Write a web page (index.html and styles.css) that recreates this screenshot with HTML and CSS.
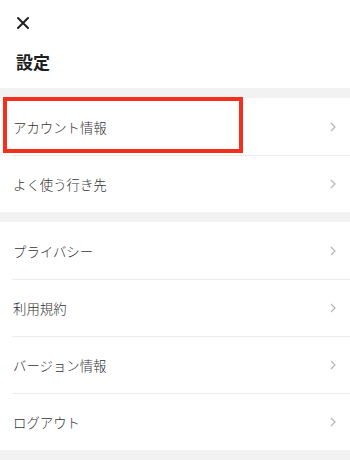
FILE: index.html
```html
<!DOCTYPE html>
<html lang="ja">
<head>
<meta charset="utf-8">
<link rel="stylesheet" href="styles.css">
</head>
<body>
<div class="page">
  <header class="header">
    <div class="close">
      <svg width="14" height="14" viewBox="0 0 14 14"><path d="M2 2 L12 12 M12 2 L2 12" stroke="#222" stroke-width="2" stroke-linecap="round"/></svg>
    </div>
    <h1 class="title">設定</h1>
  </header>
  <div class="body">
    <section class="group first">
      <div class="row"><span>アカウント情報</span><svg class="chev" width="6" height="10" viewBox="0 0 6 10"><path d="M1 1 L5 5 L1 9" fill="none" stroke="#b5b5b5" stroke-width="1.2"/></svg></div>
      <div class="row"><span>よく使う行き先</span><svg class="chev" width="6" height="10" viewBox="0 0 6 10"><path d="M1 1 L5 5 L1 9" fill="none" stroke="#b5b5b5" stroke-width="1.2"/></svg></div>
      <div class="highlight"></div>
    </section>
    <section class="group">
      <div class="row"><span>プライバシー</span><svg class="chev" width="6" height="10" viewBox="0 0 6 10"><path d="M1 1 L5 5 L1 9" fill="none" stroke="#b5b5b5" stroke-width="1.2"/></svg></div>
      <div class="row"><span>利用規約</span><svg class="chev" width="6" height="10" viewBox="0 0 6 10"><path d="M1 1 L5 5 L1 9" fill="none" stroke="#b5b5b5" stroke-width="1.2"/></svg></div>
      <div class="row"><span>バージョン情報</span><svg class="chev" width="6" height="10" viewBox="0 0 6 10"><path d="M1 1 L5 5 L1 9" fill="none" stroke="#b5b5b5" stroke-width="1.2"/></svg></div>
      <div class="row"><span>ログアウト</span><svg class="chev" width="6" height="10" viewBox="0 0 6 10"><path d="M1 1 L5 5 L1 9" fill="none" stroke="#b5b5b5" stroke-width="1.2"/></svg></div>
    </section>
  </div>
</div>
</body>
</html>
```
FILE: styles.css
```css
html, body {
  margin: 0;
  padding: 0;
  background: #f2f2f2;
}
body {
  font-family: "Noto Sans CJK JP", "Noto Sans", sans-serif;
  color: #444;
  width: 350px;
  height: 460px;
  overflow: hidden;
}
.page {
  display: flex;
  flex-direction: column;
}
.header {
  background: #fff;
  height: 88px;
  box-sizing: border-box;
  padding: 16px 0 0 16px;
}
.close {
  width: 14px;
  height: 14px;
}
.close svg {
  display: block;
}
.title {
  margin: 20px 0 0 0;
  font-size: 17px;
  font-weight: 700;
  color: #1e1e1e;
  line-height: 24px;
}
.body {
  display: flex;
  flex-direction: column;
  gap: 10px;
  padding-top: 10px;
}
.group {
  background: #fff;
  position: relative;
}
.row {
  height: 57px;
  box-sizing: border-box;
  display: flex;
  align-items: center;
  justify-content: space-between;
  padding: 0 14px 0 13px;
  font-size: 13.4px;
  font-weight: 300;
  color: #333;
  position: relative;
}
.row + .row::before {
  content: "";
  position: absolute;
  left: 12px;
  right: 0;
  top: 0;
  height: 1px;
  background: #ececec;
}
.chev {
  display: block;
}
.highlight {
  position: absolute;
  left: 3px;
  top: -1px;
  width: 240px;
  height: 56px;
  box-sizing: border-box;
  border: 4px solid #f4301c;
}
```
